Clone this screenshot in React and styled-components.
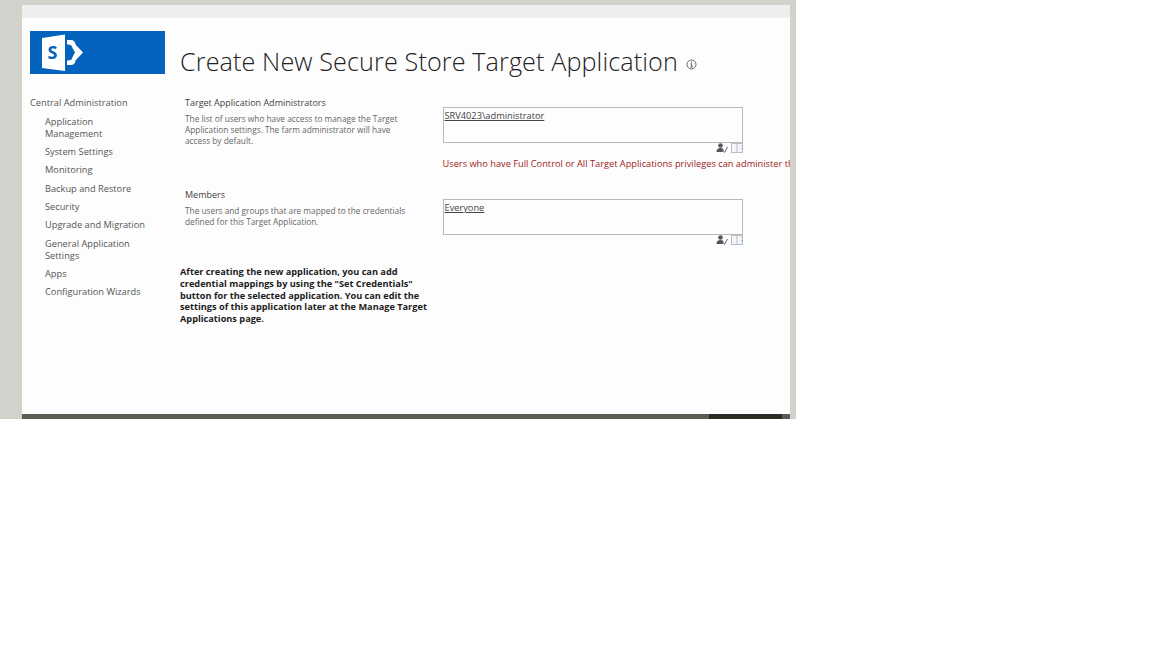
import React from "react";
import styled, { createGlobalStyle } from "styled-components";

const Global = createGlobalStyle`
  html, body { margin: 0; padding: 0; background: #fff; }
  body { font-family: "Open Sans", "Liberation Sans", sans-serif; }
`;
const Frame = styled.div`
  width: 796px; height: 419px; box-sizing: border-box; background: #d0d2cb;
  padding: 5px 6px 0 22px; overflow: hidden;
`;
const Page = styled.div`
  width: 768px; height: 414px; background: #fdfdfd; display: flex; flex-direction: column; overflow: hidden;
`;
const TopBar = styled.div`height: 13px; background: #eeeeee; flex: none;`;
const Main = styled.div`flex: 1; display: flex; min-height: 0;`;
const Side = styled.nav`width: 158px; flex: none; padding: 13px 0 0 8px; box-sizing: border-box;`;
const Logo = styled.div`
  width: 135px; height: 43px; background: #0463bd; padding: 3px 0 0 11px; box-sizing: border-box; margin-bottom: 23px;
`;
const NavTop = styled.div`font-size: 9.25px; line-height: 12px; color: #555; margin-bottom: 6.5px;`;
const NavItem = styled.div`
  font-size: 9.25px; line-height: 12px; color: #555; margin: 0 0 6.35px 15px; width: 102px;
`;
const Content = styled.div`flex: 1; min-width: 0; overflow: hidden;`;
const TitleRow = styled.div`display: flex; align-items: center; height: 34px; margin: 26px 0 19px;`;
const Title = styled.h1`
  margin: 0; font-weight: 300; font-size: 25.2px; line-height: 34px; color: #222; white-space: nowrap; letter-spacing: .1px;
`;
const Info = styled.svg`width: 11px; height: 11px; margin: 6px 0 0 8px; flex: none;`;
const Section = styled.section`display: flex; height: ${p => p.$h}px;`;
const Left = styled.div`width: 262.5px; padding-left: 5px; box-sizing: border-box; flex: none;`;
const SecTitle = styled.div`font-size: 9px; line-height: 12px; color: #444; margin-bottom: 4px;`;
const Desc = styled.div`font-size: 8.3px; line-height: 11px; color: #666; width: 222px;`;
const Right = styled.div`flex: 1; min-width: 0; padding-top: 10px;`;
const Box = styled.div`
  width: 300px; height: 36px; box-sizing: border-box; border: 1px solid #b9b9b9; padding: 2px 0 0 1px;
  font-size: 9.25px; line-height: 12px; color: #444; background: #fdfdfd;
`;
const Name = styled.span`text-decoration: underline;`;
const Tools = styled.div`width: 300px; display: flex; justify-content: flex-end; align-items: flex-start; gap: 3px; height: 10px;`;
const Warn = styled.div`font-size: 9.25px; line-height: 12px; color: #a01c22; white-space: nowrap; margin-top: 5px;`;
const Note = styled.p`
  margin: 17px 0 0; width: 250px; font-size: 9.2px; line-height: 11.75px; font-weight: 700; color: #1c1c1c;
`;
const Bottom = styled.div`height: 5px; flex: none; background: #5c5c54; display: flex; justify-content: flex-end; padding-right: 8px;`;
const Dark = styled.div`width: 73px; background: #2b2c26;`;

const SpLogo = () => (
  <svg width="46" height="37" viewBox="0 0 46 37">
    <path d="M1 4 L24 0.500 V37 L1 34 Z" fill="#fff" />
    <text x="6.500" y="25" fontFamily="Open Sans, sans-serif" fontWeight="700" fontSize="18" fill="#0463bd">S</text>
    <path d="M26 6 H30 A4.500 4.500 0 0 1 34.500 10.500 L42 18.500 L34.500 26.500 A4.500 4.500 0 0 1 30 31 H26 V26.500 Q31 27 31.500 23 L34 18.500 L31.500 14 Q31 10 26 10.500 Z" fill="#fff" />
  </svg>
);
const InfoIcon = () => (
  <Info viewBox="0 0 11 11">
    <circle cx="5.500" cy="5.500" r="4.500" fill="none" stroke="#666" strokeWidth="1" />
    <path d="M5.500 2.500v1M4.500 4.800h1.200v3M4.300 8h2.500" stroke="#555" strokeWidth="1" fill="none" />
  </Info>
);
const CheckNames = () => (
  <svg width="12" height="10" viewBox="0 0 12 10">
    <circle cx="4.500" cy="2.500" r="2.300" fill="#555" />
    <path d="M0.500 9c0-3 1.500-4 4-4s3 1 3 2l-1 2z" fill="#555" />
    <path d="M6.500 7l2 2.500L11.500 4" stroke="#667" strokeWidth="1" fill="none" />
  </svg>
);
const Browse = () => (
  <svg width="12" height="10" viewBox="0 0 12 10">
    <rect x="0.500" y="0.500" width="11" height="9" fill="#f4f5f6" stroke="#b3bfcd" />
    <path d="M6 .5v9" stroke="#b3bfcd" strokeWidth="1" />
    <path d="M11 2v1" stroke="#d9a05a" strokeWidth="1" />
    <path d="M11 5v1" stroke="#6f94bd" strokeWidth="1" />
  </svg>
);
const nav = ["Application Management", "System Settings", "Monitoring", "Backup and Restore", "Security", "Upgrade and Migration", "General Application Settings", "Apps", "Configuration Wizards"];

export default function App() {
  return (
    <>
      <Global />
      <Frame>
        <Page>
          <TopBar />
          <Main>
            <Side>
              <Logo><SpLogo /></Logo>
              <NavTop>Central Administration</NavTop>
              {nav.map(n => <NavItem key={n}>{n}</NavItem>)}
            </Side>
            <Content>
              <TitleRow>
                <Title>Create New Secure Store Target Application</Title>
                <InfoIcon />
              </TitleRow>
              <Section $h={92}>
                <Left>
                  <SecTitle>Target Application Administrators</SecTitle>
                  <Desc>The list of users who have access to manage the Target Application settings. The farm administrator will have access by default.</Desc>
                </Left>
                <Right>
                  <Box><Name>SRV4023\administrator</Name></Box>
                  <Tools><CheckNames /><Browse /></Tools>
                  <Warn>Users who have Full Control or All Target Applications privileges can administer this Target Application.</Warn>
                </Right>
              </Section>
              <Section $h={60}>
                <Left>
                  <SecTitle>Members</SecTitle>
                  <Desc>The users and groups that are mapped to the credentials defined for this Target Application.</Desc>
                </Left>
                <Right>
                  <Box><Name>Everyone</Name></Box>
                  <Tools><CheckNames /><Browse /></Tools>
                </Right>
              </Section>
              <Note>After creating the new application, you can add credential mappings by using the "Set Credentials" button for the selected application. You can edit the settings of this application later at the Manage Target Applications page.</Note>
            </Content>
          </Main>
          <Bottom><Dark /></Bottom>
        </Page>
      </Frame>
    </>
  );
}
